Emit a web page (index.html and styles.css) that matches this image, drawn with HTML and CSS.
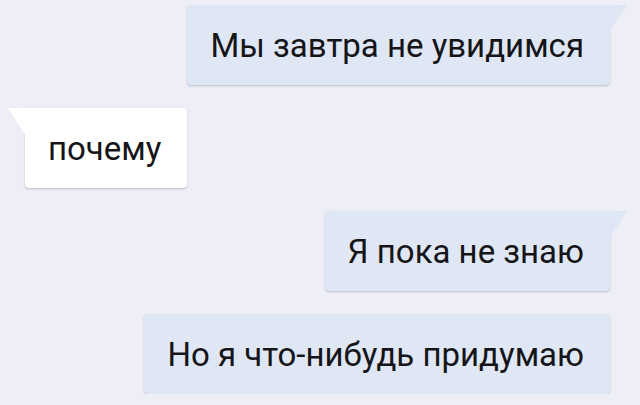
FILE: index.html
```html
<!DOCTYPE html>
<html lang="ru">
<head>
    <meta charset="UTF-8">
    <meta name="viewport" content="width=device-width, initial-scale=1.0">
    <title>Чат</title>
    <link rel="stylesheet" href="styles.css">
</head>
<body>

<div class="chat">
    <!-- Сообщения -->
    <div class="msg out tail">Мы завтра не увидимся</div>
    <div class="msg in tail">почему</div>
    <div class="msg out tail">Я пока не знаю</div>
    <div class="msg out">Но я что-нибудь придумаю</div>
</div>

</body>
</html>
```

FILE: styles.css
```css
body {
    font-family: Roboto, "Liberation Sans", Arial, sans-serif;
    background-color: #eeeef6;
    margin: 0;
    padding: 0;
}

.chat {
    display: flex;
    flex-direction: column;
    gap: 23px;
    padding: 5px 30px 0 25px;
}

.msg {
    position: relative;
    height: 80px;
    display: flex;
    align-items: center;
    padding: 0 26px 0 23px;
    font-size: 33px;
    color: #151518;
    border-radius: 4px;
    box-shadow: 0 1px 2px rgba(90, 100, 130, 0.35);
}

.msg.out {
    align-self: flex-end;
    background-color: #dfe6f4;
}

.msg.in {
    align-self: flex-start;
    background-color: #ffffff;
}

.msg.tail::after {
    content: "";
    position: absolute;
    top: 0;
    width: 18px;
    height: 28px;
}

.msg.out.tail {
    border-top-right-radius: 0;
}

.msg.out.tail::after {
    right: -17px;
    background-color: #dfe6f4;
    clip-path: polygon(0 0, 100% 0, 0 100%);
}

.msg.in.tail {
    border-top-left-radius: 0;
}

.msg.in.tail::after {
    left: -17px;
    background-color: #ffffff;
    clip-path: polygon(0 0, 100% 0, 100% 100%);
}
```
